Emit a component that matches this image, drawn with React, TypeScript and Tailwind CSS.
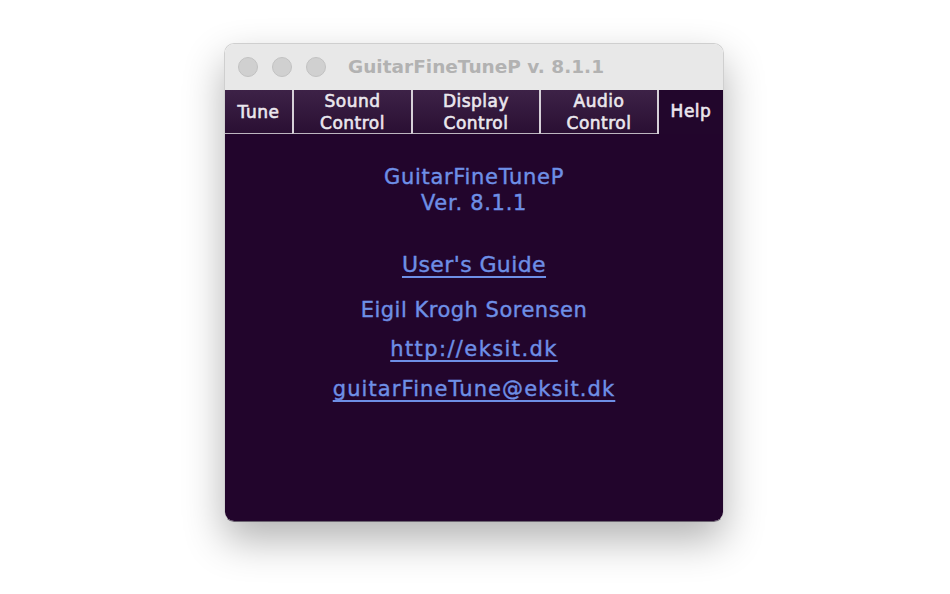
import React from "react";

const tabFont = { fontFamily: '"DejaVu Sans", "Liberation Sans", sans-serif' };

function Tab({ lines, width, first }: { lines: string[]; width: string; first?: boolean }) {
  return (
    <div
      className={`${width} h-full flex flex-col items-center justify-center border-b border-[#bdb6c0] bg-gradient-to-b from-[#3d2247] to-[#2a0f33] text-[#ebe7ee] text-[17px] tracking-[0.5px] leading-[22px] [-webkit-text-stroke:0.6px_#ebe7ee] ${
        first ? "" : "border-l-2 border-l-[#d6d0d8]"
      }`}
      style={tabFont}
    >
      {lines.map((l) => (
        <span key={l}>{l}</span>
      ))}
    </div>
  );
}

export default function App() {
  const body = { fontFamily: '"DejaVu Sans", "Liberation Sans", sans-serif' };
  return (
    <div className="w-[950px] h-[594px] bg-white pt-[43px] pl-[224px]">
      <div className="w-[500px] h-[479px] rounded-[10px] overflow-hidden flex flex-col border border-[#cfcfcf] border-b-[#6b6470] shadow-[0_18px_40px_rgba(0,0,0,0.3)]">
        <div className="h-[46px] bg-[#e8e8e8] flex items-center relative shrink-0">
          <div className="flex gap-[14px] pl-[13px]">
            <div className="w-[20px] h-[20px] rounded-full bg-[#d0d0d0] border border-[#c2c2c2]" />
            <div className="w-[20px] h-[20px] rounded-full bg-[#d0d0d0] border border-[#c2c2c2]" />
            <div className="w-[20px] h-[20px] rounded-full bg-[#d0d0d0] border border-[#c2c2c2]" />
          </div>
          <div className="ml-[22px] text-[18.5px] font-bold text-[#b2b2b2]" style={body}>
            GuitarFineTuneP v. 8.1.1
          </div>
        </div>
        <div className="h-[44px] flex shrink-0 bg-[#22062c]">
          <Tab lines={["Tune"]} width="w-[67px]" first />
          <Tab lines={["Sound", "Control"]} width="w-[119px]" />
          <Tab lines={["Display", "Control"]} width="w-[128px]" />
          <Tab lines={["Audio", "Control"]} width="w-[118px]" />
          <div
            className="flex-1 h-full flex items-center justify-center border-l-2 border-l-[#d6d0d8] text-[#ebe7ee] text-[17px] tracking-[0.5px] [-webkit-text-stroke:0.6px_#ebe7ee]"
            style={tabFont}
          >
            Help
          </div>
        </div>
        <div
          className="flex-1 bg-[#22052c] flex flex-col items-center text-[#6e8fe6] pt-[30px] [-webkit-text-stroke:0.4px_#6e8fe6]"
          style={body}
        >
          <div className="text-[21px] tracking-[0.7px] leading-[26px]">GuitarFineTuneP</div>
          <div className="text-[21px] tracking-[0.7px] leading-[26px]">Ver. 8.1.1</div>
          <a className="mt-[35px] text-[22px] tracking-[0.4px] leading-[28px] underline underline-offset-[4px]">User's Guide</a>
          <div className="mt-[17px] text-[21px] tracking-[0.5px] leading-[28px]">Eigil Krogh Sorensen</div>
          <a className="mt-[11px] text-[21px] tracking-[1.4px] leading-[28px] underline underline-offset-[4px]">http://eksit.dk</a>
          <a className="mt-[12px] text-[21px] tracking-[1.1px] leading-[28px] underline underline-offset-[4px]">guitarFineTune@eksit.dk</a>
        </div>
      </div>
    </div>
  );
}
